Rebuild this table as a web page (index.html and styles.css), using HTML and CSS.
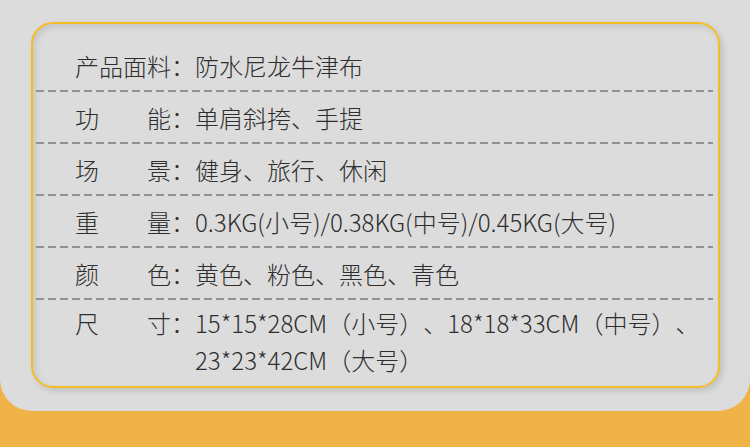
FILE: index.html
```html
<!DOCTYPE html>
<html lang="zh-CN">
<head>
    <meta charset="UTF-8">
    <meta name="viewport" content="width=device-width, initial-scale=1.0">
    <title>产品参数</title>
    <link rel="stylesheet" href="styles.css">
</head>
<body>
    <div class="panel">
        <div class="spec-card">
            <div class="spec-row">
                <span class="spec-label wide">产品面料</span><span class="spec-colon">：</span>
                <span class="spec-value">防水尼龙牛津布</span>
            </div>
            <div class="spec-row">
                <span class="spec-label">功能</span><span class="spec-colon">：</span>
                <span class="spec-value">单肩斜挎、手提</span>
            </div>
            <div class="spec-row">
                <span class="spec-label">场景</span><span class="spec-colon">：</span>
                <span class="spec-value">健身、旅行、休闲</span>
            </div>
            <div class="spec-row">
                <span class="spec-label">重量</span><span class="spec-colon">：</span>
                <span class="spec-value">0.3KG(小号)/0.38KG(中号)/0.45KG(大号)</span>
            </div>
            <div class="spec-row">
                <span class="spec-label">颜色</span><span class="spec-colon">：</span>
                <span class="spec-value">黄色、粉色、黑色、青色</span>
            </div>
            <div class="spec-row last">
                <span class="spec-label">尺寸</span><span class="spec-colon">：</span>
                <span class="spec-value">15*15*28CM（小号）、18*18*33CM（中号）、23*23*42CM（大号）</span>
            </div>
        </div>
    </div>
</body>
</html>
```

FILE: styles.css
```css
body {
    margin: 0;
    padding: 0;
    background-color: #f0b347;
    font-family: 'Noto Sans CJK SC', 'Noto Sans', sans-serif;
    font-weight: 300;
    color: #2e2e2e;
}
.panel {
    height: 411px;
    box-sizing: border-box;
    padding: 22px 30px 0 31px;
    background-color: #dcdcdc;
    border-radius: 0 0 32px 32px;
}
.spec-card {
    border: 2px solid #f3bd24;
    border-radius: 22px;
    padding: 16px 5px 8px 3px;
    box-shadow: 3px 3px 6px rgba(0, 0, 0, 0.13), inset 3px 3px 6px rgba(0, 0, 0, 0.1);
}
.spec-row {
    display: flex;
    align-items: center;
    height: 52px;
    box-sizing: border-box;
    padding: 0 0 2px 39px;
    font-size: 24px;
    line-height: 37px;
    text-spacing-trim: space-all;
    background-image: repeating-linear-gradient(to right, #929292 0, #929292 8px, transparent 8px, transparent 12px);
    background-size: 100% 2px;
    background-position: left bottom;
    background-repeat: no-repeat;
}
.spec-row.last {
    height: auto;
    align-items: flex-start;
    padding-top: 4px;
    padding-bottom: 0;
    background-image: none;
}
.spec-label {
    width: 96px;
    flex-shrink: 0;
    text-align: justify;
    text-align-last: justify;
}
.spec-colon {
    width: 24px;
    flex-shrink: 0;
}
.spec-value {
    flex: 1;
}
```
